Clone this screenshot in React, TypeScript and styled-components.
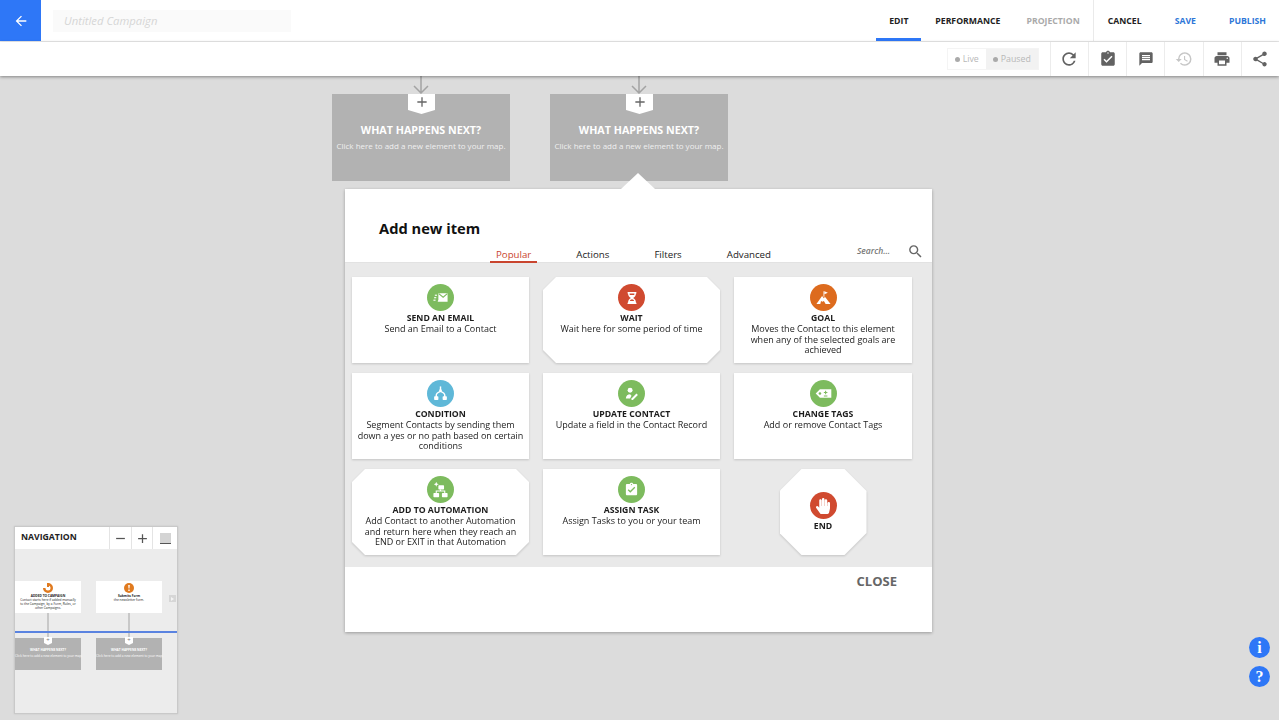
import React from "react";
import styled, { createGlobalStyle } from "styled-components";
import {
  MdArrowBack,
  MdAdd,
  MdRemove,
  MdRefresh,
  MdAssignmentTurnedIn,
  MdMessage,
  MdHistory,
  MdPrint,
  MdShare,
  MdSearch,
} from "react-icons/md";
import { FaHandPaper, FaHourglassHalf } from "react-icons/fa";

const GlobalStyle = createGlobalStyle`
  html, body { margin: 0; padding: 0; height: 100%; }
  body { font-family: "Open Sans", "Liberation Sans", sans-serif; background: #dcdcdc; }
  #root { height: 100%; }
  * { box-sizing: border-box; }
`;

const Page = styled.div`
  display: flex;
  flex-direction: column;
  height: 720px;
  width: 1279px;
  overflow: hidden;
`;

const TopBar = styled.header`
  display: flex;
  align-items: stretch;
  height: 42px;
  background: #fff;
  border-bottom: 1px solid #ececec;
`;

const BackButton = styled.div`
  width: 41px;
  background: #2e77f7;
  color: #fff;
  display: flex;
  align-items: center;
  justify-content: center;
  font-size: 16px;
`;

const TitleField = styled.div`
  width: 238px;
  height: 22px;
  margin: 10px 0 0 12px;
  padding-left: 11px;
  background: #fafafa;
  color: #d6d6d6;
  font-size: 11.3px;
  font-style: italic;
  line-height: 22px;
`;

const TopNav = styled.nav`
  margin-left: auto;
  display: flex;
  align-items: stretch;
`;

const NavTab = styled.div<{ $active?: boolean }>`
  width: 45px;
  display: flex;
  align-items: center;
  justify-content: center;
  font-size: 8.7px;
  font-weight: 700;
  white-space: nowrap;
  color: #222;
  border-bottom: 3px solid ${({ $active }) => ($active ? "#2e77f7" : "transparent")};
  padding-top: 3px;
`;

const NavGroup = styled.div`
  display: flex;
  align-items: center;
  margin-left: 14px;
  gap: 26px;
`;

const ActionGroup = styled.div`
  display: flex;
  align-items: center;
  margin-left: 13px;
  padding: 0 13px 0 14px;
  gap: 33px;
  border-left: 1px solid #eaeaea;
`;

const ActionLink = styled.span<{ $tone?: "blue" | "muted" }>`
  font-size: 8.7px;
  font-weight: 700;
  color: ${({ $tone }) => ($tone === "blue" ? "#2e77d8" : $tone === "muted" ? "#aaa" : "#222")};
`;

const SubBar = styled.div`
  display: flex;
  justify-content: flex-end;
  align-items: stretch;
  height: 34px;
  background: #fff;
  box-shadow: 0 1px 3px rgba(0, 0, 0, 0.4);
  position: relative;
  z-index: 2;
`;

const StatusToggle = styled.div`
  display: flex;
  align-self: center;
  height: 22px;
  margin-right: 11px;
  border: 1px solid #f4f4f4;
`;

const StatusItem = styled.span<{ $on?: boolean }>`
  display: flex;
  align-items: center;
  gap: 3px;
  padding: 0 7px;
  font-size: 8.8px;
  color: #b8b8b8;
  background: ${({ $on }) => ($on ? "#f2f2f2" : "#fff")};
  &::before {
    content: "";
    width: 5px;
    height: 5px;
    border-radius: 50%;
    background: #aaa;
  }
`;

const ToolButton = styled.div<{ $faded?: boolean; $size?: number }>`
  width: 38.2px;
  display: flex;
  align-items: center;
  justify-content: center;
  border-left: 1px solid #ececec;
  font-size: ${({ $size }) => $size ?? 18}px;
  color: ${({ $faded }) => ($faded ? "#c6c6c6" : "#626262")};
`;

const Canvas = styled.main`
  position: relative;
  flex: 1;
  background: #dcdcdc;
  overflow: hidden;
`;

const FlowNode = styled.div<{ $x: number }>`
  position: absolute;
  left: ${({ $x }) => $x}px;
  top: 18px;
  width: 178px;
  height: 87px;
  background: #b2b2b2;
  color: #fff;
  text-align: center;
  padding-top: 27px;
`;

const NodeArrow = styled.svg`
  position: absolute;
  left: 80px;
  top: -18px;
  width: 18px;
  height: 18px;
`;

const NodeTab = styled.div`
  position: absolute;
  left: 76px;
  top: 0;
  width: 27px;
  height: 20px;
  background: #fff;
  clip-path: polygon(0 0, 100% 0, 100% 80%, 50% 100%, 0 80%);
  color: #666;
  font-size: 16px;
  display: flex;
  justify-content: center;
`;

const NodeTitle = styled.div`
  font-size: 10.7px;
  font-weight: 700;
  line-height: 18px;
`;

const NodeText = styled.div`
  font-size: 8px;
  line-height: 14px;
  white-space: nowrap;
  color: #f0f0f0;
`;

const Modal = styled.section`
  position: absolute;
  left: 345px;
  top: 113px;
  width: 587px;
  height: 443px;
  background: #fff;
  box-shadow: 0 1px 3px rgba(0, 0, 0, 0.3);
  display: flex;
  flex-direction: column;
`;

const Caret = styled.div`
  position: absolute;
  left: 276px;
  top: -16px;
  width: 34px;
  height: 16px;
  background: #fff;
  clip-path: polygon(50% 0, 100% 100%, 0 100%);
`;

const ModalHeader = styled.div`
  height: 74px;
  padding-top: 29px;
  border-bottom: 1px solid #e2e2e2;
  display: flex;
  flex-direction: column;
`;

const ModalTitle = styled.h2`
  margin: 0 0 0 34px;
  font-size: 14.7px;
  font-weight: 700;
  line-height: 21px;
  color: #111;
`;

const TabRow = styled.div`
  display: flex;
  align-items: flex-end;
  gap: 33px;
  margin: auto 0 0 145px;
`;

const TabItem = styled.div<{ $active?: boolean }>`
  padding: 1px 6px 0;
  height: 16px;
  font-size: 9.7px;
  line-height: 14px;
  font-weight: 500;
  color: ${({ $active }) => ($active ? "#c9452f" : "#222")};
  border-bottom: 2px solid ${({ $active }) => ($active ? "#c9452f" : "transparent")};
`;

const SearchBox = styled.div`
  margin-left: auto;
  margin-right: 8px;
  display: flex;
  align-items: center;
  gap: 17px;
  height: 24px;
  font-size: 8.5px;
  font-style: italic;
  font-weight: 600;
  color: #777;
  span {
    margin-bottom: 2px;
  }
  svg {
    font-size: 17px;
    color: #666;
  }
`;

const CardGrid = styled.div`
  display: grid;
  grid-template-columns: 177px 177px 178px;
  grid-auto-rows: 86px;
  gap: 10px 14px;
  height: 304px;
  padding: 14px 0 0 7px;
  background: #e9e9e9;
`;

const CardWrap = styled.div<{ $narrow?: boolean }>`
  filter: drop-shadow(0 1px 1px rgba(0, 0, 0, 0.16));
  ${({ $narrow }) => ($narrow ? "width: 87px; justify-self: center;" : "")}
`;

const chamfer = (c: number) =>
  `polygon(${c}px 0, calc(100% - ${c}px) 0, 100% ${c}px, 100% calc(100% - ${c}px), calc(100% - ${c}px) 100%, ${c}px 100%, 0 calc(100% - ${c}px), 0 ${c}px)`;

const CardFace = styled.div<{ $cut: number; $top: number; $wide?: boolean }>`
  height: 100%;
  background: #fff;
  padding: ${({ $top }) => $top}px ${({ $wide }) => ($wide ? "3px" : "10px")} 0;
  text-align: center;
  color: #222;
  ${({ $cut }) => ($cut ? `clip-path: ${chamfer($cut)};` : "")}
`;

const IconCircle = styled.div<{ $bg: string; $size?: number }>`
  width: 27px;
  height: 27px;
  margin: 0 auto;
  border-radius: 50%;
  background: ${({ $bg }) => $bg};
  color: #fff;
  display: flex;
  align-items: center;
  justify-content: center;
  font-size: ${({ $size }) => $size ?? 16}px;
`;

const CardTitle = styled.div`
  margin-top: 1px;
  font-size: 8.7px;
  font-weight: 700;
  line-height: 12px;
  color: #1c1c1c;
`;

const CardText = styled.div`
  font-size: 9px;
  font-weight: 500;
  line-height: 10.7px;
`;

const ModalFooter = styled.div`
  display: flex;
  justify-content: flex-end;
  padding: 5px 35px 0 0;
  font-size: 13px;
  font-weight: 700;
  line-height: 18px;
  color: #666;
`;

const MiniMap = styled.aside`
  position: absolute;
  left: 14px;
  bottom: 6px;
  width: 164px;
  height: 188px;
  background: #ececec;
  border: 1px solid #c9c9c9;
  box-shadow: 0 0 2px rgba(0, 0, 0, 0.1);
`;

const MiniHeader = styled.div`
  display: flex;
  height: 22px;
  background: #fff;
`;

const MiniLabel = styled.div`
  flex: 1;
  padding-left: 6px;
  font-size: 8.7px;
  font-weight: 700;
  line-height: 21px;
  color: #222;
`;

const MiniButton = styled.div<{ $width: number }>`
  width: ${({ $width }) => $width}px;
  display: flex;
  align-items: center;
  justify-content: center;
  border-left: 1px solid #e4e4e4;
  font-size: 15px;
  color: #555;
`;

const MiniSquare = styled.span`
  width: 11px;
  height: 11px;
  background: #d4d4d4;
  border-bottom: 1px solid #555;
`;

const MiniBoard = styled.div`
  position: relative;
  display: grid;
  grid-template-columns: 66px 66px;
  grid-auto-rows: 32px;
  gap: 25px 15px;
  padding: 32px 0 0 0;
`;

const MiniCard = styled.div<{ $ghost?: boolean }>`
  position: relative;
  background: ${({ $ghost }) => ($ghost ? "#b2b2b2" : "#fff")};
  color: ${({ $ghost }) => ($ghost ? "#fff" : "#222")};
  text-align: center;
  padding-top: ${({ $ghost }) => ($ghost ? "11px" : "2px")};
  font-size: 3.2px;
  line-height: 3.9px;
  white-space: nowrap;
  b {
    display: block;
    font-size: 3.2px;
    margin-bottom: ${({ $ghost }) => ($ghost ? "2px" : "0")};
  }
`;

const MiniIcon = styled.svg`
  display: block;
  width: 10px;
  height: 10px;
  margin: 0 auto 2px;
`;

const MiniLink = styled.div`
  position: absolute;
  left: 32px;
  top: -25px;
  width: 2px;
  height: 25px;
  background: #c8c8c8;
`;

const MiniTab = styled.div`
  position: absolute;
  left: 29px;
  top: -1px;
  width: 8px;
  height: 8px;
  background: #fff;
  clip-path: polygon(0 0, 100% 0, 100% 75%, 50% 100%, 0 75%);
  color: #777;
  font-size: 6px;
  line-height: 7px;
`;

const MiniLine = styled.div`
  position: absolute;
  left: 0;
  right: 0;
  top: 82px;
  height: 2px;
  background: #5a83e0;
`;

const MiniNext = styled.div`
  position: absolute;
  right: 1px;
  top: 46px;
  width: 7px;
  height: 7px;
  background: #d6d6d6;
  &::after {
    content: "";
    position: absolute;
    left: 2px;
    top: 1.5px;
    border-left: 3px solid #f4f4f4;
    border-top: 2px solid transparent;
    border-bottom: 2px solid transparent;
  }
`;

const HelpStack = styled.div`
  position: absolute;
  right: 9px;
  bottom: 33px;
  display: flex;
  flex-direction: column;
  gap: 8px;
`;

const HelpButton = styled.div`
  width: 21px;
  height: 21px;
  border-radius: 50%;
  background: #2e77f7;
  color: #fff;
  font-family: "Liberation Serif", serif;
  font-size: 16px;
  font-weight: 700;
  line-height: 21px;
  text-align: center;
`;

const Glyph = ({ children }: { children: React.ReactNode }) => (
  <svg width="17" height="17" viewBox="0 0 24 24" fill="#fff">
    {children}
  </svg>
);

const EmailIcon = () => (
  <Glyph>
    <path d="M9 6h13v12H8l1-3z" />
    <path d="M9.500 6.500l6.200 5 6-5" fill="none" stroke="#7dbb5e" strokeWidth="1.600" />
    <rect x="4" y="8" width="3" height="1.600" />
    <rect x="3" y="11.500" width="3" height="1.600" />
    <rect x="2" y="15" width="3" height="1.600" />
  </Glyph>
);

const GoalIcon = () => (
  <Glyph>
    <path d="M2 21l8-11 2.500 3 1.500-2 8 10h-7l-2.500-4-2 1-2-1-1 4z" />
    <path d="M12 3h1.200v8H12z" />
    <path d="M13.200 3l5 2.200-5 2.200z" />
  </Glyph>
);

const ConditionIcon = () => (
  <Glyph>
    <path d="M11 2h2v5h-2z" />
    <circle cx="12" cy="8" r="2" />
    <path d="M6 17v-2.500C6 11 9 10 12 9c3 1 6 2 6 5.500V17" fill="none" stroke="#fff" strokeWidth="2" />
    <rect x="3" y="16" width="6" height="5" rx="1" />
    <rect x="15" y="16" width="6" height="5" rx="1" />
  </Glyph>
);

const UpdateIcon = () => (
  <Glyph>
    <circle cx="10" cy="7.500" r="3.500" />
    <path d="M4 19c0-4 3-6 6-6l2 2-2 4z" />
    <path d="M12 19l7-7 2 2-7 7h-2z" />
  </Glyph>
);

const TagIcon = () => (
  <Glyph>
    <path d="M1 12l6-6h16v12H7z" />
    <circle cx="7" cy="12" r="1.800" fill="#7dbb5e" />
    <path d="M15 8v5M12.500 10.500h5M12.500 15.500h5" stroke="#7dbb5e" strokeWidth="1.500" />
  </Glyph>
);

const AutomationIcon = () => (
  <Glyph>
    <path d="M6 1l1 2.500L9.500 4.500 7 5.500 6 8 5 5.500 2.500 4.500 5 3.500z" />
    <rect x="9" y="6" width="8" height="6" rx="1" />
    <rect x="2" y="17" width="8" height="6" rx="1" />
    <rect x="14" y="17" width="8" height="6" rx="1" />
    <path d="M6 17v-3h12v3M12 12v2" fill="none" stroke="#fff" strokeWidth="1.500" />
  </Glyph>
);

const cards = [
  { title: "SEND AN EMAIL", text: "Send an Email to a Contact", bg: "#7dbb5e", icon: <EmailIcon /> },
  { title: "WAIT", text: "Wait here for some period of time", bg: "#d04a30", icon: <FaHourglassHalf />, cut: 13, size: 12 },
  {
    title: "GOAL",
    text: "Moves the Contact to this element when any of the selected goals are achieved",
    bg: "#dd6b1e",
    icon: <GoalIcon />,
  },
  {
    title: "CONDITION",
    text: "Segment Contacts by sending them down a yes or no path based on certain conditions",
    bg: "#5fb8d8",
    icon: <ConditionIcon />,
    wide: true,
  },
  { title: "UPDATE CONTACT", text: "Update a field in the Contact Record", bg: "#7dbb5e", icon: <UpdateIcon /> },
  { title: "CHANGE TAGS", text: "Add or remove Contact Tags", bg: "#7dbb5e", icon: <TagIcon /> },
  {
    title: "ADD TO AUTOMATION",
    text: "Add Contact to another Automation and return here when they reach an END or EXIT in that Automation",
    bg: "#7dbb5e",
    icon: <AutomationIcon />,
    cut: 13,
  },
  { title: "ASSIGN TASK", text: "Assign Tasks to you or your team", bg: "#7dbb5e", icon: <MdAssignmentTurnedIn />, size: 15 },
];

const Node = ({ x }: { x: number }) => (
  <FlowNode $x={x}>
    <NodeArrow viewBox="0 0 18 18" fill="none" stroke="#a3a3a3" strokeWidth="1.500">
      <path d="M9 0v16M2 10l7 7 7-7" />
    </NodeArrow>
    <NodeTab>
      <MdAdd />
    </NodeTab>
    <NodeTitle>WHAT HAPPENS NEXT?</NodeTitle>
    <NodeText>Click here to add a new element to your map.</NodeText>
  </FlowNode>
);

const MiniGhost = () => (
  <MiniCard $ghost>
    <MiniLink />
    <MiniTab>+</MiniTab>
    <b>WHAT HAPPENS NEXT?</b>
    Click here to add a new element to your map.
  </MiniCard>
);

export default function App() {
  return (
    <Page>
      <GlobalStyle />
      <TopBar>
        <BackButton>
          <MdArrowBack />
        </BackButton>
        <TitleField>Untitled Campaign</TitleField>
        <TopNav>
          <NavTab $active>EDIT</NavTab>
          <NavGroup>
            <ActionLink>PERFORMANCE</ActionLink>
            <ActionLink $tone="muted">PROJECTION</ActionLink>
          </NavGroup>
          <ActionGroup>
            <ActionLink>CANCEL</ActionLink>
            <ActionLink $tone="blue">SAVE</ActionLink>
            <ActionLink $tone="blue">PUBLISH</ActionLink>
          </ActionGroup>
        </TopNav>
      </TopBar>
      <SubBar>
        <StatusToggle>
          <StatusItem>Live</StatusItem>
          <StatusItem $on>Paused</StatusItem>
        </StatusToggle>
        <ToolButton $size={20}>
          <MdRefresh />
        </ToolButton>
        <ToolButton>
          <MdAssignmentTurnedIn />
        </ToolButton>
        <ToolButton $size={16}>
          <MdMessage />
        </ToolButton>
        <ToolButton $faded>
          <MdHistory />
        </ToolButton>
        <ToolButton>
          <MdPrint />
        </ToolButton>
        <ToolButton>
          <MdShare />
        </ToolButton>
      </SubBar>
      <Canvas>
        <Node x={332} />
        <Node x={550} />
        <Modal>
          <Caret />
          <ModalHeader>
            <ModalTitle>Add new item</ModalTitle>
            <TabRow>
              <TabItem $active>Popular</TabItem>
              <TabItem>Actions</TabItem>
              <TabItem>Filters</TabItem>
              <TabItem>Advanced</TabItem>
              <SearchBox>
                <span>Search...</span>
                <MdSearch />
              </SearchBox>
            </TabRow>
          </ModalHeader>
          <CardGrid>
            {cards.map((card) => (
              <CardWrap key={card.title}>
                <CardFace $cut={card.cut ?? 0} $top={7} $wide={card.wide}>
                  <IconCircle $bg={card.bg} $size={card.size}>
                    {card.icon}
                  </IconCircle>
                  <CardTitle>{card.title}</CardTitle>
                  <CardText>{card.text}</CardText>
                </CardFace>
              </CardWrap>
            ))}
            <CardWrap $narrow>
              <CardFace $cut={22} $top={23}>
                <IconCircle $bg="#d04a30">
                  <FaHandPaper />
                </IconCircle>
                <CardTitle>END</CardTitle>
              </CardFace>
            </CardWrap>
          </CardGrid>
          <ModalFooter>CLOSE</ModalFooter>
        </Modal>
        <MiniMap>
          <MiniHeader>
            <MiniLabel>NAVIGATION</MiniLabel>
            <MiniButton $width={22}>
              <MdRemove />
            </MiniButton>
            <MiniButton $width={21}>
              <MdAdd />
            </MiniButton>
            <MiniButton $width={25}>
              <MiniSquare />
            </MiniButton>
          </MiniHeader>
          <MiniBoard>
            <MiniCard>
              <MiniIcon viewBox="0 0 10 10">
                <path d="M5 0a5 5 0 1 1-5 5h2.500A2.500 2.500 0 1 0 5 2.500z" fill="#e07a1f" />
                <path d="M4 0h2v4H4z" fill="#e07a1f" />
              </MiniIcon>
              <b>ADDED TO CAMPAIGN</b>
              Contact starts here if added manually
              <br />
              to the Campaign, by a Form, Rules, or
              <br />
              other Campaigns.
            </MiniCard>
            <MiniCard>
              <MiniIcon viewBox="0 0 10 10">
                <circle cx="5" cy="5" r="5" fill="#e07a1f" />
                <path d="M4.200 2h1.600l-.3 3.500h-1zM4.300 6.500h1.400v1.400H4.300z" fill="#fff" />
              </MiniIcon>
              <b>Submits Form</b>
              the newsletter form.
            </MiniCard>
            <MiniGhost />
            <MiniGhost />
            <MiniLine />
            <MiniNext />
          </MiniBoard>
        </MiniMap>
        <HelpStack>
          <HelpButton>i</HelpButton>
          <HelpButton>?</HelpButton>
        </HelpStack>
      </Canvas>
    </Page>
  );
}
